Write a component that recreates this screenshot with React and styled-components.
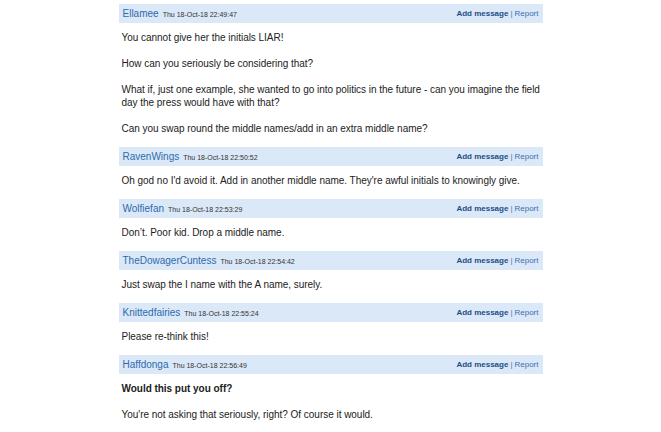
import React from 'react';
import styled, { createGlobalStyle } from 'styled-components';

const GlobalStyle = createGlobalStyle`
  html, body {
    margin: 0;
    padding: 0;
    background: #ffffff;
  }
  body {
    font-family: "Liberation Sans", Arial, Helvetica, sans-serif;
  }
`;

const Thread = styled.div`
  width: 424px;
  margin: 0 auto;
  padding-top: 4px;
`;

const Post = styled.div`
  display: flex;
  flex-direction: column;
`;

const PostHeader = styled.div`
  display: flex;
  align-items: center;
  justify-content: space-between;
  height: 19px;
  padding: 0 4px;
  background: #dbe8f8;
`;

const Author = styled.div`
  display: flex;
  align-items: baseline;
  gap: 4px;
`;

const Username = styled.a`
  font-size: 10px;
  color: #2e6aad;
  text-decoration: none;
`;

const Stamp = styled.span`
  font-size: 7px;
  color: #333333;
`;

const Actions = styled.div`
  display: flex;
  align-items: baseline;
  gap: 2px;
  font-size: 8px;
  color: #4a74a8;
`;

const ActionLink = styled.a`
  color: ${props => (props.primary ? '#1f4e87' : '#3a6fb0')};
  font-weight: ${props => (props.primary ? 'bold' : 'normal')};
  text-decoration: none;
`;

const PostBody = styled.div`
  padding: 8px 0 12px 3px;
  font-size: 10px;
  line-height: 13px;
  letter-spacing: -0.03px;
  color: #222222;
`;

const Para = styled.p`
  margin: 0 0 13px;
  font-weight: ${props => (props.bold ? 'bold' : 'normal')};

  &:last-child {
    margin-bottom: 0;
  }
`;

const posts = [
  {
    user: 'Ellamee',
    time: 'Thu 18-Oct-18 22:49:47',
    paras: [
      { text: 'You cannot give her the initials LIAR!' },
      { text: 'How can you seriously be considering that?' },
      { text: 'What if, just one example, she wanted to go into politics in the future - can you imagine the field day the press would have with that?' },
      { text: 'Can you swap round the middle names/add in an extra middle name?' },
    ],
  },
  {
    user: 'RavenWings',
    time: 'Thu 18-Oct-18 22:50:52',
    paras: [{ text: "Oh god no I'd avoid it. Add in another middle name. They're awful initials to knowingly give." }],
  },
  {
    user: 'Wolfiefan',
    time: 'Thu 18-Oct-18 22:53:29',
    paras: [{ text: 'Don’t. Poor kid. Drop a middle name.' }],
  },
  {
    user: 'TheDowagerCuntess',
    time: 'Thu 18-Oct-18 22:54:42',
    paras: [{ text: 'Just swap the I name with the A name, surely.' }],
  },
  {
    user: 'Knittedfairies',
    time: 'Thu 18-Oct-18 22:55:24',
    paras: [{ text: 'Please re-think this!' }],
  },
  {
    user: 'Haffdonga',
    time: 'Thu 18-Oct-18 22:56:49',
    paras: [
      { text: 'Would this put you off?', bold: true },
      { text: "You're not asking that seriously, right? Of course it would." },
    ],
  },
];

function App() {
  return (
    <>
      <GlobalStyle />
      <Thread>
        {posts.map((post) => (
          <Post key={post.time}>
            <PostHeader>
              <Author>
                <Username href="#">{post.user}</Username>
                <Stamp>{post.time}</Stamp>
              </Author>
              <Actions>
                <ActionLink href="#" primary>Add message</ActionLink>
                <span>|</span>
                <ActionLink href="#">Report</ActionLink>
              </Actions>
            </PostHeader>
            <PostBody>
              {post.paras.map((p, i) => (
                <Para key={i} bold={p.bold}>{p.text}</Para>
              ))}
            </PostBody>
          </Post>
        ))}
      </Thread>
    </>
  );
}

export default App;
